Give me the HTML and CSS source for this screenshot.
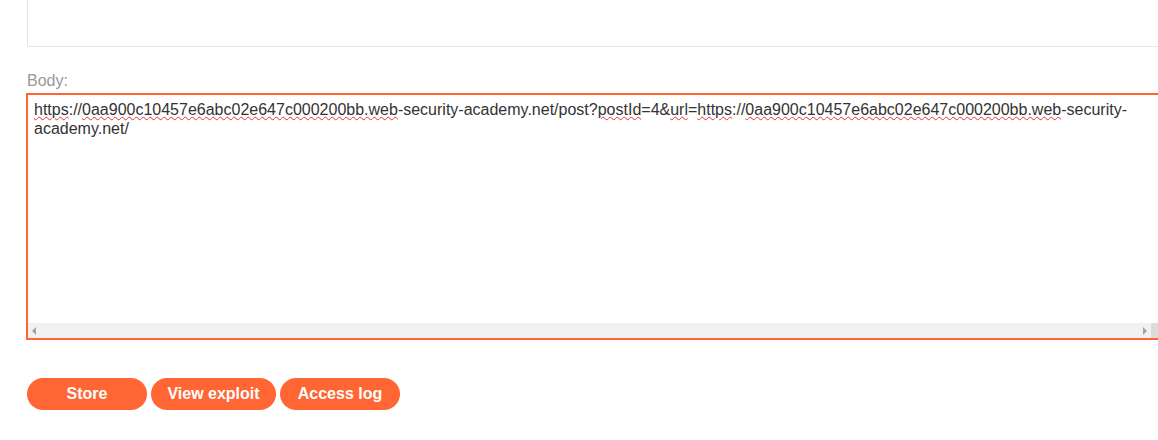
FILE: index.html
```html
<!DOCTYPE html>
<html>
<head>
<meta charset="utf-8">
<link rel="stylesheet" href="styles.css">
</head>
<body>
<div class="page">
  <div class="prev-field"></div>
  <label class="label">Body:</label>
  <div class="textarea">
    <div class="text"><span class="sp">https</span>://<span class="sp">0aa900c10457e6abc02e647c000200bb.web</span>-security-academy.net/post?<span class="sp">postId</span>=4&amp;<span class="sp">url</span>=<span class="sp">https</span>://<span class="sp">0aa900c10457e6abc02e647c000200bb.web</span>-security-academy.net/</div>
    <div class="hscroll">
      <div class="track">
        <span class="arrow left"></span>
        <span class="arrow right"></span>
      </div>
      <div class="corner"></div>
    </div>
  </div>
  <div class="buttons">
    <button class="btn store">Store</button>
    <button class="btn view">View exploit</button>
    <button class="btn log">Access log</button>
  </div>
</div>
</body>
</html>
```

FILE: styles.css
```css
html, body {
  margin: 0;
  padding: 0;
  background: #fff;
  overflow: hidden;
}
body {
  width: 1158px;
  height: 440px;
  font-family: "Liberation Sans", Arial, sans-serif;
}
.page {
  padding-left: 26px;
  width: 1300px;
}
.prev-field {
  margin-left: 1px;
  width: 1200px;
  border: 1px solid #e6e6e6;
  border-top: none;
  box-sizing: border-box;
  height: 47px;
}
.label {
  display: block;
  margin-top: 25px;
  margin-left: 1px;
  font-size: 16px;
  line-height: 18px;
  color: #999;
}
.textarea {
  margin-top: 3px;
  width: 1142px;
  height: 247px;
  border: 2px solid #ff6633;
  box-sizing: border-box;
  display: flex;
  flex-direction: column;
  background: #fff;
}
.text {
  flex: 1;
  padding: 5px 36px 0 6px;
  font-size: 16px;
  line-height: 19px;
  color: #333;
}
.sp {
  text-decoration: underline wavy #e8303a;
  text-decoration-thickness: 1px;
  text-underline-offset: 1px;
}
.hscroll {
  display: flex;
  height: 15px;
}
.track {
  flex: 1;
  background: #f1f1f1;
  display: flex;
  align-items: center;
  justify-content: space-between;
  padding: 0 4px;
}
.arrow {
  width: 0;
  height: 0;
  border-top: 4px solid transparent;
  border-bottom: 4px solid transparent;
}
.arrow.left {
  border-right: 4px solid #a3a3a3;
}
.arrow.right {
  border-left: 4px solid #a3a3a3;
}
.corner {
  width: 15px;
  background: #dcdcdc;
}
.buttons {
  margin-top: 38px;
  margin-left: 1px;
  display: flex;
  gap: 4px;
}
.btn {
  height: 32px;
  border: none;
  border-radius: 16px;
  background: #ff6633;
  color: #fff;
  font-family: "Liberation Sans", Arial, sans-serif;
  font-weight: bold;
  font-size: 16px;
  padding: 0 16px;
  cursor: pointer;
}
.btn.store {
  width: 120px;
}
.btn.view {
  width: 125px;
}
.btn.log {
  width: 120px;
}
```
